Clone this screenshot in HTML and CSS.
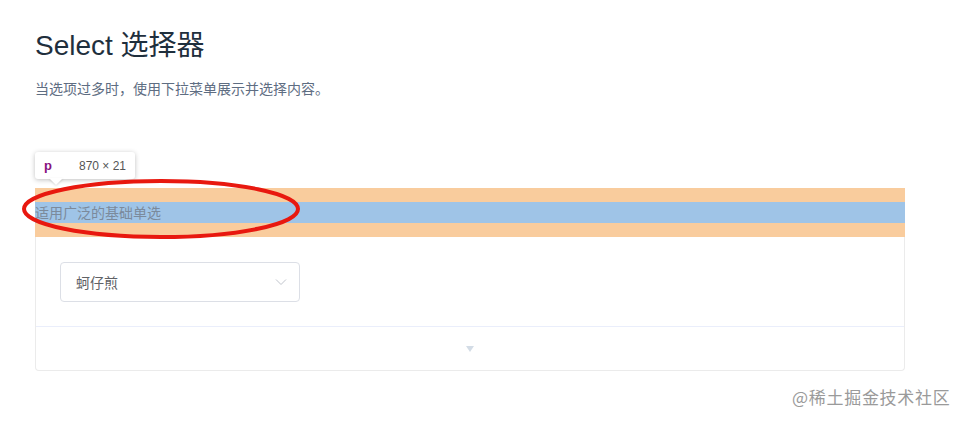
FILE: index.html
```html
<!DOCTYPE html>
<html lang="zh">
<head>
<meta charset="utf-8">
<link rel="stylesheet" href="styles.css">
</head>
<body>
<div class="page">
  <h2 class="title">Select 选择器</h2>
  <p class="lead">当选项过多时，使用下拉菜单展示并选择内容。</p>

  <div class="demo">
    <div class="tip">
      <span class="tip-tag">p</span>
      <span class="tip-size">870 × 21</span>
      <span class="tip-arrow"></span>
    </div>
    <div class="hl-margin">
      <p class="hl-content">适用广泛的基础单选</p>
    </div>
    <svg class="ring" width="282" height="64" viewBox="0 0 282 64">
      <ellipse cx="141" cy="32" rx="137" ry="28" fill="none" stroke="#e8180f" stroke-width="4"/>
    </svg>
    <div class="card">
      <div class="card-body">
        <div class="select">
          <span class="select-value">蚵仔煎</span>
          <svg class="chev" width="12" height="8" viewBox="0 0 12 8"><path d="M1 1.5 L6 6.5 L11 1.5" fill="none" stroke="#c0c4cc" stroke-width="1"/></svg>
        </div>
      </div>
      <div class="card-ctrl">
        <span class="tri"></span>
      </div>
    </div>
  </div>
</div>
<div class="mark">@稀土掘金技术社区</div>
</body>
</html>
```

FILE: styles.css
```css
html, body {
  margin: 0;
  padding: 0;
  background: #fff;
}
body {
  width: 966px;
  height: 422px;
  overflow: hidden;
  position: relative;
  font-family: "Liberation Sans", "Noto Sans CJK SC", sans-serif;
}
.page {
  padding: 24px 0 0 35px;
  width: 870px;
}
.title {
  margin: 0;
  font-size: 28px;
  line-height: 44px;
  font-weight: 400;
  color: #1f2f3d;
}
.lead {
  margin: 10px 0 0;
  font-size: 14px;
  line-height: 22px;
  color: #5e6d82;
}
.demo {
  position: relative;
  margin-top: 88px;
}
.tip {
  position: absolute;
  left: 0;
  top: -36px;
  width: 100px;
  height: 27px;
  background: #fff;
  border-radius: 3px;
  box-shadow: 0 1px 5px rgba(0,0,0,0.25);
  display: flex;
  align-items: center;
  font-size: 12px;
  z-index: 2;
}
.tip-tag {
  color: #881280;
  font-weight: 700;
  font-size: 13px;
  margin-left: 9px;
}
.tip-size {
  color: #555;
  margin-left: 27px;
}
.tip-arrow {
  position: absolute;
  left: 14px;
  bottom: -6px;
  width: 0;
  height: 0;
  border-left: 7px solid transparent;
  border-right: 7px solid transparent;
  border-top: 7px solid #fff;
  filter: drop-shadow(0 1px 1px rgba(0,0,0,0.15));
}
.hl-margin {
  background: #f9cc9d;
  padding: 14px 0;
}
.hl-content {
  margin: 0;
  background: #9fc4e7;
  font-size: 14px;
  line-height: 21px;
  height: 21px;
  color: #7b8a9c;
  font-family: "Noto Sans CJK SC", sans-serif;
}
.ring {
  position: absolute;
  left: -15px;
  top: -11px;
  z-index: 3;
}
.card {
  border: 1px solid #ebebeb;
  border-top: none;
  border-radius: 0 0 4px 4px;
}
.card-body {
  padding: 25px 24px 24px;
}
.select {
  width: 240px;
  height: 40px;
  box-sizing: border-box;
  border: 1px solid #dcdfe6;
  border-radius: 4px;
  display: flex;
  align-items: center;
  justify-content: space-between;
  padding: 0 10px 0 15px;
}
.select-value {
  font-size: 14px;
  color: #606266;
  font-family: "Noto Sans CJK SC", sans-serif;
}
.chev {
  display: block;
  margin-right: 2px;
}
.card-ctrl {
  border-top: 1px solid #eaeefb;
  height: 43px;
  display: flex;
  align-items: center;
  justify-content: center;
}
.tri {
  width: 0;
  height: 0;
  border-left: 4px solid transparent;
  border-right: 4px solid transparent;
  border-top: 6px solid #d3dce6;
}
.mark {
  position: absolute;
  left: 792px;
  top: 386px;
  font-size: 17px;
  line-height: 22px;
  color: #9a9a9a;
  font-family: "Noto Sans CJK SC", sans-serif;
  letter-spacing: 0.7px;
}
```
